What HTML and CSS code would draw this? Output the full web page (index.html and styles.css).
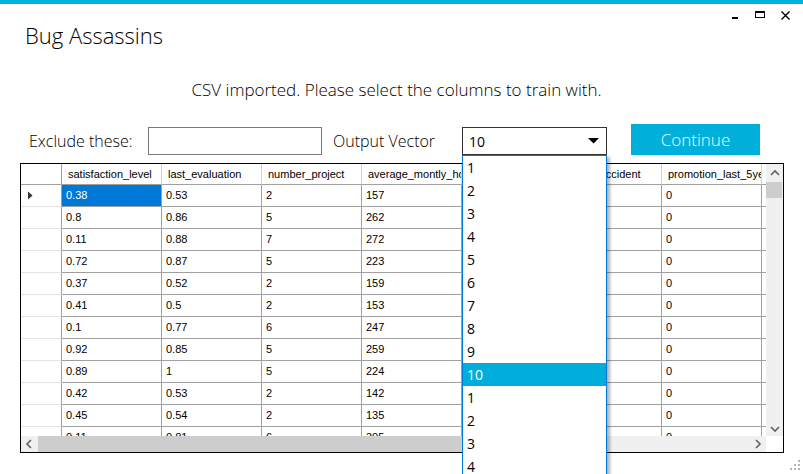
FILE: index.html
```html
<!DOCTYPE html>
<html>
<head>
<meta charset="utf-8">
<link rel="stylesheet" href="styles.css">
</head>
<body>
<div class="window">
  <div class="accent"></div>
  <header class="titlebar">
    <h1 class="title">Bug Assassins</h1>
    <svg class="winctl" width="60" height="10" viewBox="0 0 60 10" shape-rendering="crispEdges">
      <rect x="1" y="7" width="6" height="2" fill="#000"/>
      <rect x="24.5" y="1.5" width="9" height="6" fill="none" stroke="#000" stroke-width="1"/>
      <rect x="24" y="1" width="10" height="2" fill="#000"/>
      <path d="M50.5 1.5 L58.5 9.5 M58.5 1.5 L50.5 9.5" stroke="#000" stroke-width="1.4" shape-rendering="geometricPrecision"/>
    </svg>
  </header>
  <p class="subtitle">CSV imported. Please select the columns to train with.</p>
  <div class="controls">
    <span class="lbl lbl-exclude">Exclude these:</span>
    <div class="textbox"></div>
    <span class="lbl lbl-output">Output Vector</span>
    <div class="combo"><span>10</span><svg width="11" height="6" viewBox="0 0 11 6"><polygon points="0,0 11,0 5.5,5.5" fill="#000"/></svg></div>
    <button class="continue">Continue</button>
  </div>
  <div class="grid">
    <div class="viewport">
      <div class="row head"><div class="rh"></div><div class="cell">satisfaction_level</div><div class="cell">last_evaluation</div><div class="cell">number_project</div><div class="cell">average_montly_hours</div><div class="cell">time_spend_company</div><div class="cell">Work_accident</div><div class="cell">promotion_last_5years</div><div class="cell">sales</div></div>
      <div class="row"><div class="rh"><svg width="14" height="21" viewBox="0 0 14 21"><polygon points="7,6.5 11.5,10.5 7,14.5" fill="#333"/></svg></div><div class="cell sel">0.38</div><div class="cell">0.53</div><div class="cell">2</div><div class="cell">157</div><div class="cell">3</div><div class="cell">0</div><div class="cell">0</div><div class="cell">sales</div></div>
      <div class="row"><div class="rh"></div><div class="cell">0.8</div><div class="cell">0.86</div><div class="cell">5</div><div class="cell">262</div><div class="cell">6</div><div class="cell">0</div><div class="cell">0</div><div class="cell">sales</div></div>
      <div class="row"><div class="rh"></div><div class="cell">0.11</div><div class="cell">0.88</div><div class="cell">7</div><div class="cell">272</div><div class="cell">4</div><div class="cell">0</div><div class="cell">0</div><div class="cell">sales</div></div>
      <div class="row"><div class="rh"></div><div class="cell">0.72</div><div class="cell">0.87</div><div class="cell">5</div><div class="cell">223</div><div class="cell">5</div><div class="cell">0</div><div class="cell">0</div><div class="cell">sales</div></div>
      <div class="row"><div class="rh"></div><div class="cell">0.37</div><div class="cell">0.52</div><div class="cell">2</div><div class="cell">159</div><div class="cell">3</div><div class="cell">0</div><div class="cell">0</div><div class="cell">sales</div></div>
      <div class="row"><div class="rh"></div><div class="cell">0.41</div><div class="cell">0.5</div><div class="cell">2</div><div class="cell">153</div><div class="cell">3</div><div class="cell">0</div><div class="cell">0</div><div class="cell">sales</div></div>
      <div class="row"><div class="rh"></div><div class="cell">0.1</div><div class="cell">0.77</div><div class="cell">6</div><div class="cell">247</div><div class="cell">4</div><div class="cell">0</div><div class="cell">0</div><div class="cell">sales</div></div>
      <div class="row"><div class="rh"></div><div class="cell">0.92</div><div class="cell">0.85</div><div class="cell">5</div><div class="cell">259</div><div class="cell">5</div><div class="cell">0</div><div class="cell">0</div><div class="cell">sales</div></div>
      <div class="row"><div class="rh"></div><div class="cell">0.89</div><div class="cell">1</div><div class="cell">5</div><div class="cell">224</div><div class="cell">5</div><div class="cell">0</div><div class="cell">0</div><div class="cell">sales</div></div>
      <div class="row"><div class="rh"></div><div class="cell">0.42</div><div class="cell">0.53</div><div class="cell">2</div><div class="cell">142</div><div class="cell">3</div><div class="cell">0</div><div class="cell">0</div><div class="cell">sales</div></div>
      <div class="row"><div class="rh"></div><div class="cell">0.45</div><div class="cell">0.54</div><div class="cell">2</div><div class="cell">135</div><div class="cell">3</div><div class="cell">0</div><div class="cell">0</div><div class="cell">sales</div></div>
      <div class="row"><div class="rh"></div><div class="cell">0.11</div><div class="cell">0.81</div><div class="cell">6</div><div class="cell">305</div><div class="cell">4</div><div class="cell">0</div><div class="cell">0</div><div class="cell">sales</div></div>
    </div>
    <div class="vscroll">
      <div class="sbtn"><svg width="17" height="17" viewBox="0 0 17 17"><polyline points="5,11 9,7 13,11" fill="none" stroke="#606060" stroke-width="1.6"/></svg></div>
      <div class="vthumb"></div>
      <div class="spacer"></div>
      <div class="sbtn"><svg width="17" height="17" viewBox="0 0 17 17"><polyline points="5,8 9,12 13,8" fill="none" stroke="#606060" stroke-width="1.6"/></svg></div>
    </div>
    <div class="hscroll">
      <div class="hbtn"><svg width="17" height="16" viewBox="0 0 17 16"><polyline points="10,4 6,8 10,12" fill="none" stroke="#606060" stroke-width="1.6"/></svg></div>
      <div class="hthumb"></div>
      <div class="spacer"></div>
      <div class="hbtn"><svg width="17" height="16" viewBox="0 0 17 16"><polyline points="7,4 11,8 7,12" fill="none" stroke="#606060" stroke-width="1.6"/></svg></div>
    </div>
    <div class="corner"></div>
  </div>
  <ul class="dropdown">
    <li>1</li><li>2</li><li>3</li><li>4</li><li>5</li><li>6</li><li>7</li><li>8</li><li>9</li>
    <li class="hl">10</li><li>1</li><li>2</li><li>3</li><li>4</li>
  </ul>
  <svg class="grip" width="12" height="12" viewBox="0 0 12 12" shape-rendering="crispEdges">
    <rect x="9" y="1" width="2" height="2" fill="#b4b4b4"/>
    <rect x="5" y="5" width="2" height="2" fill="#b4b4b4"/>
    <rect x="9" y="5" width="2" height="2" fill="#b4b4b4"/>
    <rect x="1" y="9" width="2" height="2" fill="#b4b4b4"/>
    <rect x="5" y="9" width="2" height="2" fill="#b4b4b4"/>
    <rect x="9" y="9" width="2" height="2" fill="#b4b4b4"/>
  </svg>
</div>
</body>
</html>
```

FILE: styles.css
```css
html, body {
  margin: 0;
  padding: 0;
  background: #fff;
}
body {
  width: 803px;
  height: 474px;
  overflow: hidden;
  font-family: "Open Sans", "DejaVu Sans", sans-serif;
  color: #000;
}
.window {
  position: relative;
  width: 803px;
  height: 474px;
  overflow: hidden;
}
.accent {
  height: 4px;
  background: #00b1df;
}
.titlebar {
  display: flex;
  justify-content: space-between;
  align-items: flex-start;
  height: 56px;
}
.title {
  margin: 17px 0 0 25px;
  font-size: 22px;
  font-weight: 300;
  line-height: 29px;
}
.winctl {
  display: block;
  margin: 6px 12px 0 0;
}
.subtitle {
  margin: 19px 0 0;
  height: 22px;
  padding-right: 10px;
  text-align: center;
  font-size: 17px;
  font-weight: 300;
  line-height: 22px;
}
.controls {
  display: flex;
  align-items: flex-end;
  height: 31px;
  margin-top: 23px;
  padding-left: 29px;
}
.lbl {
  height: 28px;
  font-size: 16px;
  font-weight: 300;
  line-height: 28px;
  white-space: nowrap;
}
.lbl-exclude {
  width: 119px;
}
.textbox {
  width: 174px;
  height: 28px;
  box-sizing: border-box;
  border: 1px solid #7a7a7a;
}
.lbl-output {
  width: 129px;
  margin-left: 11px;
}
.combo {
  display: flex;
  align-items: center;
  justify-content: space-between;
  width: 145px;
  height: 28px;
  box-sizing: border-box;
  border: 1px solid #333;
  padding: 0 7px 0 6px;
  font-size: 14px;
}
.combo svg {
  display: block;
}
.continue {
  width: 129px;
  height: 31px;
  margin-left: 24px;
  padding: 0;
  border: 0;
  background: #00b0db;
  color: #eef9fc;
  font-family: "Open Sans", sans-serif;
  font-size: 17px;
  font-weight: 300;
}
.grid {
  display: grid;
  grid-template-columns: 745px 17px;
  grid-template-rows: 272px 16px;
  width: 764px;
  height: 290px;
  margin: 8px 0 0 20px;
  box-sizing: border-box;
  border: 1px solid #000;
  font-family: "Liberation Sans", Arial, sans-serif;
  font-size: 11px;
}
.viewport {
  overflow: hidden;
}
.row {
  display: flex;
  height: 22px;
}
.row.head {
  height: 21px;
}
.rh {
  flex: 0 0 41px;
  box-sizing: border-box;
  border-right: 1px solid #a0a0a0;
  border-bottom: 1px solid #e3e3e3;
}
.rh svg {
  display: block;
}
.cell {
  flex: 0 0 100px;
  box-sizing: border-box;
  border-right: 1px solid #a0a0a0;
  border-bottom: 1px solid #a0a0a0;
  padding-left: 4px;
  line-height: 21px;
  white-space: nowrap;
  overflow: hidden;
}
.head .cell {
  border-right-color: #d4d4d4;
  padding-left: 6px;
  line-height: 20px;
}
.head .rh {
  border-bottom-color: #a0a0a0;
}
.cell.sel {
  background: #0078d7;
  color: #fff;
}
.vscroll {
  display: flex;
  flex-direction: column;
  background: #f0f0f0;
}
.sbtn {
  flex: 0 0 17px;
  height: 17px;
}
.sbtn svg, .hbtn svg {
  display: block;
}
.vthumb {
  flex: 0 0 16px;
  margin: 1px 1px 0 0;
  background: #cdcdcd;
}
.spacer {
  flex: 1;
}
.hscroll {
  display: flex;
  background: #f0f0f0;
}
.hbtn {
  flex: 0 0 17px;
}
.hthumb {
  flex: 0 0 562px;
  background: #cdcdcd;
}
.corner {
  background: #fff;
}
.dropdown {
  position: absolute;
  left: 462px;
  top: 155px;
  width: 145px;
  margin: 0;
  padding: 0;
  list-style: none;
  box-sizing: border-box;
  border: 1px solid #0078d7;
  border-bottom: 0;
  background: #fff;
  box-shadow: 3px 2px 3px rgba(0, 0, 0, 0.3);
  font-size: 14px;
}
.dropdown li {
  height: 23px;
  padding-left: 4px;
  line-height: 23px;
}
.dropdown li.hl {
  background: #00addb;
  color: #fff;
}
.grip {
  position: absolute;
  right: 2px;
  bottom: 3px;
}
```
